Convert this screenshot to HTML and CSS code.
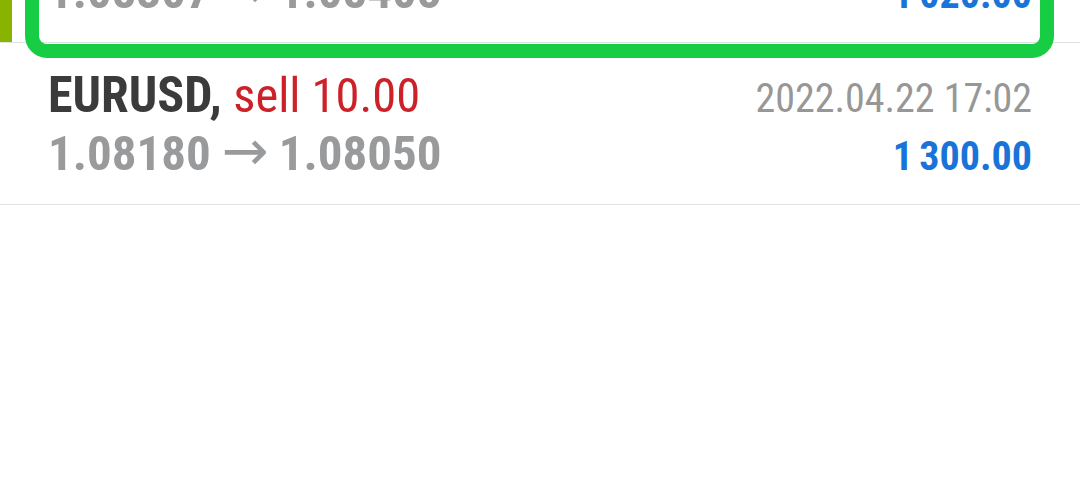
FILE: index.html
```html
<!DOCTYPE html>
<html lang="en">
<head>
<meta charset="utf-8">
<title>Trade history</title>
<link rel="stylesheet" href="styles.css">
</head>
<body>
<div class="viewport">
  <ul class="deals">
    <li class="deal deal-highlight">
      <span class="marker"></span>
      <div class="deal-grid">
        <span class="symbol">EURUSD, <span class="side sell">sell 10.00</span></span>
        <span class="time">2022.04.22 16:48</span>
        <span class="prices">1.08307<span class="arrow">→</span>1.08405</span>
        <span class="profit">1 020.00</span>
      </div>
      <span class="focus-ring"></span>
    </li>
    <li class="deal">
      <div class="deal-grid">
        <span class="symbol">EURUSD, <span class="side sell">sell 10.00</span></span>
        <span class="time">2022.04.22 17:02</span>
        <span class="prices">1.08180<span class="arrow">→</span>1.08050</span>
        <span class="profit">1 300.00</span>
      </div>
    </li>
  </ul>
</div>
</body>
</html>
```
FILE: styles.css
```css
html, body {
  margin: 0;
  padding: 0;
  background: #ffffff;
}

.viewport {
  width: 1080px;
  height: 480px;
  overflow: hidden;
}

.deals {
  list-style: none;
  margin: -119px 0 0 0;
  padding: 0;
  font-family: "Roboto Condensed", "Liberation Sans Narrow", Roboto, "Liberation Sans", sans-serif;
  font-stretch: condensed;
}

.deal {
  position: relative;
  padding: 23px 48px 24px 48px;
  border-bottom: 1px solid #e2e2e2;
}

.deal-grid {
  display: grid;
  grid-template-columns: 1fr auto;
  grid-auto-rows: 57px;
  align-items: baseline;
}

.symbol {
  font-size: 50px;
  font-weight: 700;
  color: #3b3b3b;
  white-space: nowrap;
}

.side {
  font-size: 48.5px;
  font-weight: 400;
}

.sell {
  color: #cc2128;
}

.time {
  font-size: 40px;
  color: #979797;
  text-align: right;
  white-space: nowrap;
}

.prices {
  font-size: 49px;
  font-weight: 700;
  color: #999a9c;
  white-space: nowrap;
}

.arrow {
  display: inline-block;
  margin: 0 10px 0 11px;
  font-family: "DejaVu Sans", sans-serif;
  font-stretch: normal;
  font-weight: 400;
  font-size: 56px;
  line-height: 1;
}

.profit {
  font-size: 40px;
  font-weight: 700;
  color: #1a73d8;
  text-align: right;
  white-space: nowrap;
  word-spacing: -3px;
}

.marker {
  position: absolute;
  left: 0;
  top: 0;
  bottom: 0;
  width: 12px;
  background: #88b400;
}

.focus-ring {
  position: absolute;
  left: 25px;
  right: 26px;
  top: 0;
  bottom: -16px;
  border: 14px solid #17cd44;
  border-radius: 22px;
  pointer-events: none;
}
```
